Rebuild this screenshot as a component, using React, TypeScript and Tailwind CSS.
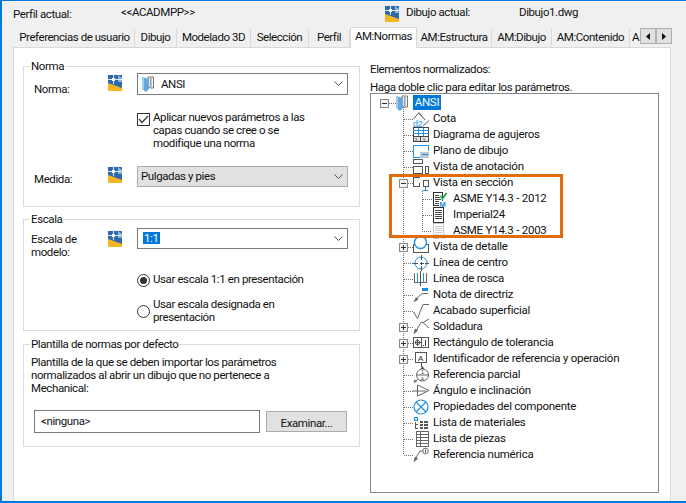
import React from "react";

const Mark = () => (
  <svg width="14" height="16" viewBox="0 0 14 16" shapeRendering="crispEdges">
    <rect x="0" y="0" width="14" height="16" fill="#2f68ad" />
    <polygon points="10,0 14,3 14,7 10,7" fill="#8fb4dc" shapeRendering="auto" />
    <rect x="0" y="4" width="14" height="1" fill="#dfe9f4" />
    <rect x="5" y="0" width="1" height="9" fill="#dfe9f4" />
    <rect x="4" y="3" width="3" height="3" fill="#ffffff" />
    <polygon points="0,8 14,13 14,16 0,16" fill="#f6b620" shapeRendering="auto" />
  </svg>
);

const Book = ({ w = 12, h = 16 }: { w?: number; h?: number }) => (
  <svg width={w} height={h} viewBox="0 0 12 16">
    <polygon points="6,1 11.5,1 11.5,12 8,12 6,10" fill="#f4f4f4" stroke="#777" strokeWidth="1" />
    <rect x="8" y="2" width="1.5" height="9" fill="#9a9a9a" />
    <polygon points="0,1 7,3 7,13 4,16 0,13" fill="#62a8dc" />
    <polygon points="0,1 2,1.6 2,14.5 0,13" fill="#9fd0f0" />
  </svg>
);

const Chevron = () => (
  <svg width="9" height="6" viewBox="0 0 9 6" className="shrink-0">
    <path d="M0.5 0.5 L4.5 4.5 L8.5 0.5" fill="none" stroke="#555" strokeWidth="1" />
  </svg>
);

const Group = ({ title, bottom, children }: { title: string; bottom: string; children: React.ReactNode }) => (
  <div className={`relative border border-[#dcdcdc] ${bottom}`}>
    <span className="absolute left-[6px] top-[-9px] bg-white px-[1px] leading-[16px]">{title}</span>
    {children}
  </div>
);

const Tabs = [
  { t: "Preferencias de usuario", w: "w-[120px]" },
  { t: "Dibujo", w: "w-[42px]" },
  { t: "Modelado 3D", w: "w-[74px]" },
  { t: "Selección", w: "w-[58px]" },
  { t: "Perfil", w: "w-[41px]" },
];
const Tabs2 = [
  { t: "AM:Estructura", w: "w-[75px]" },
  { t: "AM:Dibujo", w: "w-[60px]" },
  { t: "AM:Contenido", w: "w-[78px]" },
];

const Tab = ({ t, w }: { t: string; w: string }) => (
  <div className={`${w} h-[18px] shrink-0 border-r border-[#d9d9d9] flex items-center justify-center pb-[2px] leading-[16px] whitespace-nowrap tracking-[-0.45px]`}>{t}</div>
);

const G = "#5a5a5a";
const B = "#1e8fe6";

const ic: Record<string, React.ReactNode> = {
  cota: (
    <g fill="none" stroke={G}>
      <path d="M0.5 8 L6 1.5 L12 9 M10 15 L16 9.5" />
      <path d="M6 3 L11 8" stroke="#999" />
      <text x="0" y="16" fontSize="9" fill={B} stroke="none" fontFamily="Liberation Sans">d2</text>
    </g>
  ),
  agujeros: (
    <g fill="none" shapeRendering="crispEdges">
      <rect x="0.5" y="0.5" width="15" height="14" stroke="#444" fill="#fff" />
      <path d="M0 3.5 H16 M0 6.5 H16" stroke={B} />
      <path d="M5.5 1 V9 M10.5 1 V9" stroke={B} />
      <path d="M0 9.5 H16" stroke="#444" />
      <path d="M7.5 9 V15" stroke="#444" />
      <rect x="1" y="10" width="6" height="4" fill="#e6e6e6" />
      <rect x="8" y="10" width="7" height="4" fill="#e6e6e6" />
      <text x="2" y="14" fontSize="5" fill="#333" stroke="none" fontFamily="Liberation Sans">x</text>
      <text x="10" y="14" fontSize="5" fill="#333" stroke="none" fontFamily="Liberation Sans">y</text>
    </g>
  ),
  plano: (
    <g fill="none" shapeRendering="crispEdges">
      <path d="M15.5 8 V2.5 H0.5 V14.5 H7" stroke={B} />
      <rect x="7" y="9" width="9" height="6" fill="#b9c7d6" />
      <rect x="9" y="11" width="6" height="1" fill={B} />
    </g>
  ),
  anotacion: (
    <g fill="none" stroke="#555" shapeRendering="crispEdges">
      <rect x="0.5" y="0.5" width="9" height="4" />
      <rect x="0.5" y="7.5" width="9" height="7" />
      <rect x="12.5" y="7.5" width="3" height="7" />
    </g>
  ),
  seccion: (
    <g fill="none" shapeRendering="crispEdges">
      <path d="M6.5 2.5 H0.5 V11.5 H6.5 V8" stroke="#555" />
      <path d="M10.5 5.5 H15.5 V11.5 H10.5 Z" stroke="#555" />
      <path d="M12.5 0 V2 M12.5 12 V15.5 M10 15.5 H15" stroke={B} />
    </g>
  ),
  detalle: (
    <g fill="none">
      <rect x="0.5" y="5.5" width="15" height="8" stroke="#555" shapeRendering="crispEdges" />
      <circle cx="7.5" cy="3.5" r="6" stroke={B} strokeWidth="1.4" fill="#fff" />
    </g>
  ),
  centro: (
    <g fill="none">
      <circle cx="8" cy="8" r="6" stroke={B} />
      <path d="M8.5 0 V5 M8.5 6.5 V9.5 M8.5 11 V16 M0 8.5 H5 M6.5 8.5 H10.5 M12 8.5 H16" stroke="#555" shapeRendering="crispEdges" />
    </g>
  ),
  rosca: (
    <g fill="none" shapeRendering="crispEdges">
      <path d="M1.5 2 V11.5 H13.5 V2" stroke="#666" />
      <path d="M4.5 2 V11.5 M10.5 2 V11.5" stroke={B} />
      <path d="M7.5 0 V15" stroke="#555" />
    </g>
  ),
  directriz: (
    <g fill="none">
      <rect x="9" y="1" width="6" height="3" fill={B} />
      <path d="M15 6.5 H9 L2 13" stroke="#666" />
      <path d="M0.5 15.5 L5.5 12.5 L3 10 Z" fill="#666" />
    </g>
  ),
  acabado: (
    <g fill="none" stroke="#666">
      <path d="M0.5 9 L4.5 15.5 L10 1.5 H16" />
    </g>
  ),
  soldadura: (
    <g fill="none">
      <path d="M3 12 L8 3.5 H10 M10 3.5 L16 0 M10 3.5 L16 9" stroke="#666" />
      <path d="M0.5 15.5 L5 11.5 L2 9.5 Z" fill="#666" />
    </g>
  ),
  tolerancia: (
    <g fill="none" shapeRendering="crispEdges">
      <rect x="0.5" y="2.5" width="15" height="10" stroke="#555" />
      <path d="M8.5 3 V12" stroke="#555" />
      <circle cx="4.5" cy="7.5" r="2.2" stroke="#555" shapeRendering="auto" />
      <path d="M4.5 4 V11 M1.5 7.5 H7.5" stroke="#555" />
      <rect x="10" y="10" width="1" height="1" fill="#333" />
      <rect x="12" y="5" width="1" height="6" fill="#333" />
    </g>
  ),
  identificador: (
    <g fill="none">
      <rect x="2.5" y="1.5" width="11" height="10" stroke="#555" shapeRendering="crispEdges" />
      <text x="5" y="10" fontSize="8" fill="#333" fontFamily="Liberation Sans">A</text>
      <path d="M8.5 12 V16" stroke="#555" />
    </g>
  ),
  parcial: (
    <g fill="none">
      <circle cx="9.5" cy="8" r="6" stroke="#666" />
      <path d="M3.5 8 H15.5" stroke="#666" />
      <path d="M5 12.5 L1.5 15" stroke="#666" />
      <path d="M0.5 15.5 L4 15 L1.5 12.5 Z" fill="#666" />
      <path d="M7.5 2 L9.5 -1 L11.5 2 Z" fill="#555" />
      <text x="8" y="7" fontSize="5.5" fill="#444" fontFamily="Liberation Sans">1</text>
      <text x="7.5" y="13.5" fontSize="5.5" fill="#444" fontFamily="Liberation Sans">A</text>
    </g>
  ),
  angulo: (
    <g fill="none" stroke="#666">
      <path d="M4.5 2 L16 7.5 L4.5 13 Z" />
      <path d="M0 8 H13" />
    </g>
  ),
  propiedades: (
    <g fill="none" stroke={B}>
      <circle cx="8" cy="8" r="7" strokeWidth="1.2" />
      <path d="M3 3 L13 13 M13 3 L3 13" strokeWidth="1.2" />
    </g>
  ),
  materiales: (
    <g shapeRendering="crispEdges">
      <rect x="1" y="2" width="4" height="4" fill={B} />
      <rect x="2" y="3" width="2" height="2" fill="#cfe6f8" />
      <path d="M2.5 7 V14 M2.5 9.5 H5 M2.5 13.5 H5" stroke="#555" fill="none" />
      <rect x="7" y="6" width="8" height="8" fill="#555" />
      <path d="M7 8.5 H15 M7 11.5 H15 M10.5 6 V14" stroke="#fff" fill="none" />
    </g>
  ),
  piezas: (
    <g fill="none" stroke="#666" shapeRendering="crispEdges">
      <rect x="3.5" y="0.5" width="12" height="15" fill="#fff" />
      <path d="M3 3.5 H16 M3 6.5 H16 M3 9.5 H16 M3 12.5 H16 M7.5 0 V16" />
    </g>
  ),
  numerica: (
    <g fill="none">
      <circle cx="12.5" cy="4" r="2.8" stroke="#666" />
      <rect x="12" y="2.5" width="1" height="3" fill="#444" />
      <path d="M9.5 4 H7 L2 12" stroke="#666" />
      <path d="M0.5 15.5 L5 11.5 L2 9.5 Z" fill="#666" />
    </g>
  ),
  docOk: (
    <g fill="none" shapeRendering="crispEdges">
      <rect x="0.5" y="1.5" width="9" height="13" stroke="#333" fill="#fff" />
      <path d="M2 4.5 H6 M2 6.5 H7 M2 8.5 H8 M2 10.5 H8 M2 12.5 H7" stroke="#444" />
      <path d="M7.5 5 L9.5 7.5 L13.5 2" stroke="#29a84a" strokeWidth="2" shapeRendering="auto" />
      <rect x="6" y="10" width="7" height="6" fill="#fff" />
      <text x="6.5" y="16" fontSize="7.5" fontWeight="700" fill={B} fontFamily="Liberation Sans">M</text>
    </g>
  ),
  doc: (
    <g fill="none" shapeRendering="crispEdges">
      <rect x="0.5" y="0.5" width="10" height="14.5" stroke="#333" fill="#fff" />
      <path d="M2 3.5 H9 M2 5.5 H9 M2 7.5 H9 M2 9.5 H9 M2 11.5 H9" stroke="#444" />
    </g>
  ),
  docOff: (
    <g fill="none" shapeRendering="crispEdges">
      <rect x="0.5" y="0.5" width="10" height="14.5" stroke="#c8c8c8" fill="#fff" />
      <path d="M2 3.5 H9 M2 5.5 H9 M2 7.5 H9 M2 9.5 H9 M2 11.5 H7" stroke="#d0d0d0" />
      <rect x="6" y="11" width="8" height="5" fill="#fff" />
      <text x="7" y="16" fontSize="7" fontWeight="700" fill="#d0d0d0" fontFamily="Liberation Sans">M</text>
    </g>
  ),
};

const Expander = ({ x, open }: { x: number; open?: boolean }) => (
  <g shapeRendering="crispEdges">
    <rect x={x + 0.5} y="4.5" width="8" height="8" fill="#f4f4f4" stroke="#8a8a8a" />
    <path d={`M${x + 2} 8.5 H${x + 7}`} stroke="#333" />
    {!open && <path d={`M${x + 4.5} 6 V11`} stroke="#333" />}
  </g>
);

type Row = { label: string; icon: string; exp?: "open" | "closed"; child?: "mid" | "last"; last?: boolean };
const rows: Row[] = [
  { label: "Cota", icon: "cota" },
  { label: "Diagrama de agujeros", icon: "agujeros" },
  { label: "Plano de dibujo", icon: "plano" },
  { label: "Vista de anotación", icon: "anotacion" },
  { label: "Vista en sección", icon: "seccion", exp: "open" },
  { label: "ASME Y14.3 - 2012", icon: "docOk", child: "mid" },
  { label: "Imperial24", icon: "doc", child: "mid" },
  { label: "ASME Y14.3 - 2003", icon: "docOff", child: "last" },
  { label: "Vista de detalle", icon: "detalle", exp: "closed" },
  { label: "Línea de centro", icon: "centro" },
  { label: "Línea de rosca", icon: "rosca" },
  { label: "Nota de directriz", icon: "directriz" },
  { label: "Acabado superficial", icon: "acabado" },
  { label: "Soldadura", icon: "soldadura", exp: "closed" },
  { label: "Rectángulo de tolerancia", icon: "tolerancia", exp: "closed" },
  { label: "Identificador de referencia y operación", icon: "identificador", exp: "closed" },
  { label: "Referencia parcial", icon: "parcial" },
  { label: "Ángulo e inclinación", icon: "angulo" },
  { label: "Propiedades del componente", icon: "propiedades" },
  { label: "Lista de materiales", icon: "materiales" },
  { label: "Lista de piezas", icon: "piezas" },
  { label: "Referencia numérica", icon: "numerica", last: true },
];

const Dots = ({ d }: { d: string }) => (
  <path d={d} fill="none" stroke="#707070" strokeDasharray="1 1" shapeRendering="crispEdges" />
);

const TreeRow = ({ r }: { r: Row }) => {
  const isChild = !!r.child;
  const w = isChild ? 82 : 62;
  return (
    <div className="flex h-4 items-center">
      <svg width={w} height="16" viewBox={`0 0 ${w} 16`} className="shrink-0 overflow-visible">
        <Dots d={r.last ? "M32.5 0 V8" : "M32.5 0 V16"} />
        {isChild ? (
          <>
            <Dots d={r.child === "last" ? "M51.5 0 V8.5 H61" : "M51.5 0 V16 M52 8.5 H61"} />
            <g transform="translate(62 0)">{ic[r.icon]}</g>
          </>
        ) : (
          <>
            <Dots d="M33 8.5 H42" />
            {r.exp && <Expander x={28} open={r.exp === "open"} />}
            <g transform="translate(42 0)">{ic[r.icon]}</g>
          </>
        )}
      </svg>
      <span className="whitespace-nowrap leading-[16px] mt-[-2px]">{r.label}</span>
    </div>
  );
};

export default function App() {
  return (
    <div className="w-[686px] h-[503px] overflow-hidden bg-[#f0f0f0] border-t-[1px] border-l-[2px] border-b-[2px] border-[#0078d7] flex flex-col text-[11.5px] tracking-[-0.4px] text-[#111] font-['Roboto',sans-serif]">
      {/* Header */}
      <div className="h-[26px] shrink-0 flex items-center pl-[11px] leading-[16px]">
        <span className="w-[108px]">Perfil actual:</span>
        <span className="w-[264px] mt-[-4px]">&lt;&lt;ACADMPP&gt;&gt;</span>
        <span className="w-[21px] flex"><Mark /></span>
        <span className="w-[113px] mt-[-4px]">Dibujo actual:</span>
        <span className="mt-[-4px]">Dibujo1.dwg</span>
      </div>

      {/* Tab strip */}
      <div className="relative h-[20px] shrink-0 flex items-end pl-[13px] overflow-visible z-10">
        {Tabs.map((t) => <Tab key={t.t} {...t} />)}
        <div className="w-[67px] h-[21px] mb-[-1px] shrink-0 bg-white border border-b-0 border-[#d9d9d9] flex items-start justify-center leading-[16px] tracking-[-0.45px]">AM:Normas</div>
        {Tabs2.map((t) => <Tab key={t.t} {...t} />)}
        <div className="h-[18px] flex items-center pl-[2px] pb-[2px] leading-[16px]">A</div>
        <div className="absolute left-[638px] top-[1px] w-[32px] h-[16px] flex bg-[#e1e1e1]">
          <div className="flex-1 flex items-center justify-center border border-[#adadad]">
            <svg width="4" height="7" viewBox="0 0 4 7"><path d="M4 0 V7 L0 3.5 Z" fill="#111" /></svg>
          </div>
          <div className="flex-1 flex items-center justify-center border border-[#adadad]">
            <svg width="4" height="7" viewBox="0 0 4 7"><path d="M0 0 V7 L4 3.5 Z" fill="#111" /></svg>
          </div>
        </div>
      </div>

      {/* Panel */}
      <div className="flex-1 ml-[11px] mr-[15px] bg-white border-t border-l border-r border-[#d9d9d9] flex min-h-0">
        {/* Left column */}
        <div className="ml-[9px] w-[337px] shrink-0 pt-[18px]">
          <Group title="Norma" bottom="pb-[18px]">
            <div className="flex items-start mt-[6px] h-[25px]">
              <div className="w-[84px] pl-[10px] pt-[8px] leading-[16px]">Norma:</div>
              <div className="w-[29px] pt-[2px]"><Mark /></div>
              <div className="w-[211px] h-[22px] border border-[#7a7a7a] flex items-center pl-[4px] pr-[4px]">
                <Book />
                <span className="ml-[7px] flex-1 leading-[16px]">ANSI</span>
                <Chevron />
              </div>
            </div>
            <div className="flex items-start ml-[113px] mt-[14px]">
              <div className="w-[13px] h-[13px] mt-[1px] mr-[3px] border border-[#333] flex items-center justify-center shrink-0">
                <svg width="11" height="9" viewBox="0 0 11 9"><path d="M1 4 L4 7.5 L10 1" fill="none" stroke="#333" strokeWidth="1.2" /></svg>
              </div>
              <div className="leading-[13px] w-[170px] h-[39px] mt-[-1px] mb-[1px]">Aplicar nuevos parámetros a las capas cuando se cree o se modifique una norma</div>
            </div>
            <div className="flex items-start mt-[15px] h-[22px]">
              <div className="w-[84px] pl-[10px] pt-[5px] leading-[16px]">Medida:</div>
              <div className="w-[29px] pt-[1px]"><Mark /></div>
              <div className="w-[211px] h-[21px] border border-[#adadad] bg-[#e1e1e1] flex items-center pl-[3px] pr-[4px]">
                <span className="flex-1 leading-[16px] mt-[-2px]">Pulgadas y pies</span>
                <Chevron />
              </div>
            </div>
          </Group>

          <div className="mt-[12px]">
            <Group title="Escala" bottom="pb-[6px]">
              <div className="flex items-start mt-[8px] h-[31px]">
                <div className="w-[84px] pl-[7px] pt-[5px] leading-[13px]">Escala de modelo:</div>
                <div className="w-[29px] pt-[3px]"><Mark /></div>
                <div className="w-[211px] h-[21px] border border-[#7a7a7a] flex items-center pl-[5px] pr-[4px]">
                  <span className="flex-1"><span className="bg-[#0078d7] text-white px-[1px] leading-[12px] inline-block">1:1</span></span>
                  <Chevron />
                </div>
              </div>
              <div className="flex items-center ml-[113px] mt-[15px]">
                <div className="w-[13px] h-[13px] rounded-full border border-[#333] flex items-center justify-center mr-[3px] shrink-0">
                  <div className="w-[7px] h-[7px] rounded-full bg-[#333]" />
                </div>
                <span className="leading-[13px] mt-[-2px]">Usar escala 1:1 en presentación</span>
              </div>
              <div className="flex items-center ml-[113px] mt-[11px]">
                <div className="w-[13px] h-[13px] rounded-full border border-[#333] mr-[3px] shrink-0" />
                <div className="leading-[13px] w-[180px]">Usar escala designada en presentación</div>
              </div>
            </Group>
          </div>

          <div className="mt-[13px]">
            <Group title="Plantilla de normas por defecto" bottom="pb-[13px]">
              <div className="pl-[7px] pt-[11px] leading-[13px] w-[270px]">Plantilla de la que se deben importar los parámetros normalizados al abrir un dibujo que no pertenece a Mechanical:</div>
              <div className="flex items-center pl-[10px] gap-[6px] mt-[15px]">
                <div className="w-[226px] h-[23px] border border-[#7a7a7a] pl-[6px] pt-[2px] leading-[16px]">&lt;ninguna&gt;</div>
                <div className="w-[81px] h-[21px] border border-[#adadad] bg-[#e1e1e1] flex items-center justify-center pt-[2px] leading-[16px]">Examinar...</div>
              </div>
            </Group>
          </div>
        </div>

        {/* Right column */}
        <div className="ml-[10px] w-[289px] shrink-0 relative">
          <div className="mt-[15px] leading-[13px]">Elementos normalizados:</div>
          <div className="mt-[5px] mb-[-1px] leading-[13px] whitespace-nowrap">Haga doble clic para editar los parámetros.</div>
          <div className="h-[400px] border border-[#828790] pt-[1px] bg-white tracking-[-0.25px]">
            <div className="flex h-4 items-center">
              <svg width="42" height="16" viewBox="0 0 42 16" className="shrink-0 overflow-visible">
                <Dots d="M32.5 8 V16" />
                <Dots d="M18 8.5 H25" />
                <Expander x={9} open />
                <g transform="translate(25 0)"><Book /></g>
              </svg>
              <span className="bg-[#0078d7] text-white w-[28px] text-center h-[15px] leading-[14px] mt-[-1px]">ANSI</span>
            </div>
            {rows.map((r) => <TreeRow key={r.label} r={r} />)}
          </div>
          <div className="absolute left-[19px] top-[126px] w-[174px] h-[64px] border-[3px] border-[#e36c0a]" />
        </div>
      </div>
    </div>
  );
}
